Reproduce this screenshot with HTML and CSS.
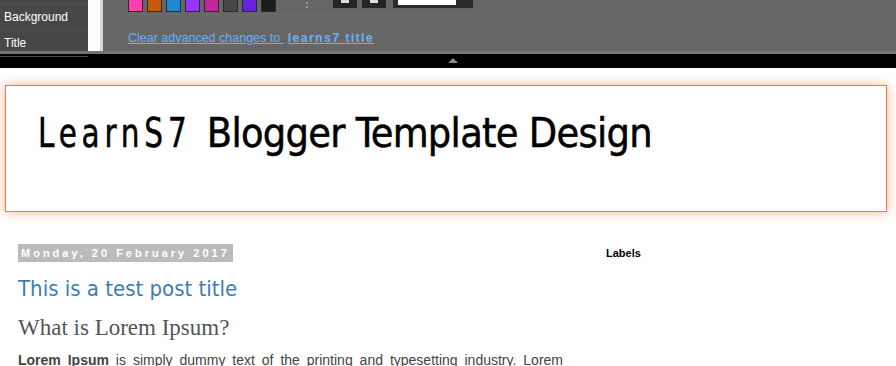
FILE: index.html
```html
<!DOCTYPE html>
<html lang="en">
<head>
  <meta charset="UTF-8" />
  <meta name="viewport" content="width=device-width, initial-scale=1.0" />
  <title>LearnS7 Blogger Template Design</title>
  <link rel="stylesheet" href="styles.css">
</head>
<body>
  <!-- Template designer panel -->
  <div class="designer">
    <ul class="side-menu">
      <li class="menu-top"></li>
      <li>Background</li>
      <li>Title</li>
    </ul>
    <div class="gutter"></div>
    <div class="panel">
      <div class="tools">
        <div class="swatches">
          <span class="swatch" style="background:#ff3fb0"></span>
          <span class="swatch" style="background:#c85a10"></span>
          <span class="swatch" style="background:#1e88d0"></span>
          <span class="swatch" style="background:#9933ff"></span>
          <span class="swatch" style="background:#c0289a"></span>
          <span class="swatch" style="background:#474747"></span>
          <span class="swatch" style="background:#6622dd"></span>
          <span class="swatch" style="background:#1c1c1c"></span>
        </div>
        <span class="dots"></span>
        <span class="tool-btn"><i></i></span>
        <span class="tool-btn"><i></i></span>
        <span class="size-box"><i></i></span>
      </div>
      <a href="#" class="clear-link">Clear advanced changes to <span class="link-name">learns7 title</span></a>
    </div>
  </div>
  <div class="collapse-bar"><span class="arrow"></span></div>

  <!-- Blog page -->
  <div class="page">
    <div class="header">
      <h1 class="blog-title"><span class="brand">LearnS7</span> Blogger Template Design</h1>
    </div>

    <div class="content">
      <div class="main">
        <h2 class="date-header">Monday, 20 February 2017</h2>
        <h3 class="post-title"><a href="#">This is a test post title</a></h3>
        <h2 class="post-heading">What is Lorem Ipsum?</h2>
        <p class="post-body"><strong>Lorem Ipsum</strong> is simply dummy text of the printing and typesetting industry. Lorem Ipsum has been the industry's standard dummy text ever since the 1500s.</p>
      </div>
      <div class="sidebar">
        <h2 class="widget-title">Labels</h2>
      </div>
    </div>
  </div>
</body>
</html>
```

FILE: styles.css
```css
/* Base */
body {
  margin: 0;
  background: #fff;
  font-family: "Liberation Sans", Arial, sans-serif;
  overflow: hidden;
}

/* Designer panel */
.designer {
  display: flex;
  height: 51px;
  background: #666;
  border-bottom: 3px solid #747474;
}
.side-menu {
  width: 88px;
  margin: 0;
  padding: 0;
  list-style: none;
  background: #474747;
  color: #fff;
  font-size: 12px;
}
.side-menu li {
  height: 25px;
  line-height: 25px;
  padding-left: 4px;
  border-bottom: 1px solid #4f4f4f;
}
.side-menu .menu-top {
  height: 4px;
}
.gutter {
  width: 12px;
  background: #fdfdfd;
  border-right: 3px solid #d8d8d8;
}
.panel {
  flex: 1;
  padding-left: 25px;
}
.tools {
  display: flex;
  align-items: flex-start;
  height: 14px;
  border-bottom: 1px solid #6e6e6e;
  width: 345px;
}
.swatches {
  display: flex;
  gap: 4px;
}
.swatch {
  width: 13px;
  height: 11px;
  border: 1px solid #2a2a2a;
  border-top: none;
}
.dots {
  width: 2px;
  height: 8px;
  margin: 2px 0 0 30px;
  background: repeating-linear-gradient(#999 0 2px, transparent 2px 4px);
}
.tool-btn {
  width: 24px;
  height: 8px;
  margin-left: 25px;
  background: #252525;
  display: flex;
  justify-content: center;
}
.tool-btn + .tool-btn {
  margin-left: 5px;
}
.tool-btn i {
  width: 8px;
  height: 3px;
  background: #ddd;
}
.size-box {
  width: 70px;
  height: 8px;
  margin-left: 7px;
  padding: 0 5px;
  background: #2a2a2a;
}
.size-box i {
  display: block;
  width: 58px;
  height: 5px;
  background: #fff;
}
.clear-link {
  display: inline-block;
  margin-top: 16px;
  color: #6ab0f5;
  font-size: 12.5px;
  text-decoration: underline;
}
.link-name {
  margin-left: 4px;
  font-weight: bold;
  letter-spacing: 1.3px;
}

.collapse-bar {
  height: 14px;
  background: #000;
  display: flex;
  justify-content: center;
  padding-left: 10px;
}
.arrow {
  margin-top: 4px;
  width: 0;
  height: 0;
  border-left: 5px solid transparent;
  border-right: 5px solid transparent;
  border-bottom: 5px solid #8a8a8a;
}

/* Blog page */
.page {
  padding: 17px 9px 0 5px;
  background: #fff;
}
.header {
  height: 125px;
  border: 1px solid #ec7a44;
  box-shadow: 0 0 10px rgba(245, 125, 65, 0.6);
}
.blog-title {
  margin: 23px 0 0 32px;
  font-family: "DejaVu Sans Condensed", "DejaVu Sans", sans-serif;
  font-weight: normal;
  font-size: 41px;
  color: #000;
  letter-spacing: -0.7px;
  -webkit-text-stroke: 0.5px #000;
}
.brand {
  display: inline-block;
  letter-spacing: 6px;
  transform: scaleX(0.8);
  transform-origin: left;
  margin-right: -34px;
}

.content {
  display: flex;
  padding: 31px 0 0 13px;
}
.main {
  width: 545px;
}
.date-header {
  display: inline-block;
  margin: 0;
  padding: 0 3px;
  height: 18px;
  line-height: 18px;
  background: #bbb;
  color: #fff;
  font-size: 11px;
  font-weight: bold;
  letter-spacing: 3px;
}
.post-title {
  margin: 14px 0 0;
  font-family: "DejaVu Sans Condensed", "DejaVu Sans", sans-serif;
  font-weight: normal;
  font-size: 22px;
}
.post-title a {
  color: #3c7db5;
  text-decoration: none;
}
.post-heading {
  margin: 14px 0 0;
  font-family: "Liberation Serif", "Times New Roman", serif;
  font-weight: normal;
  font-size: 23px;
  color: #555;
}
.post-body {
  margin: 9px 0 0;
  font-size: 14px;
  line-height: 20px;
  color: #444;
  text-align: justify;
}
.sidebar {
  padding-left: 43px;
  padding-top: 4px;
}
.widget-title {
  margin: 0;
  font-size: 11px;
  font-weight: bold;
  color: #000;
}
```
